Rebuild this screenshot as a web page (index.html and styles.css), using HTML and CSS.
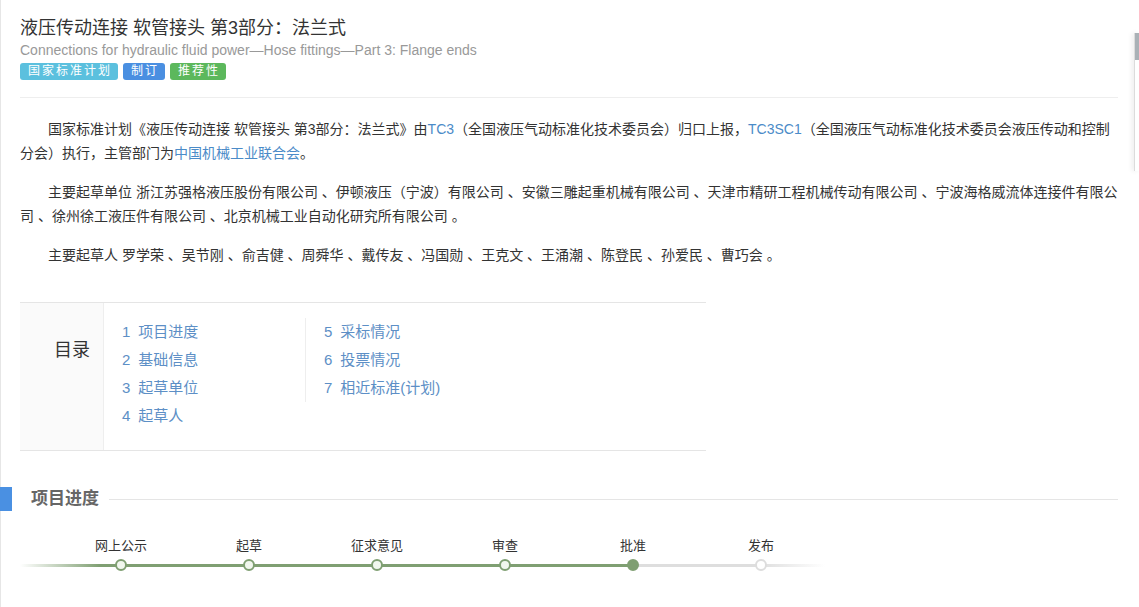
FILE: index.html
```html
<!DOCTYPE html>
<html lang="zh-CN">
<head>
<meta charset="utf-8">
<title>液压传动连接 软管接头 第3部分：法兰式</title>
<link rel="stylesheet" href="styles.css">
</head>
<body>
<div class="page">
  <header class="head">
    <h1 class="title">液压传动连接 软管接头 第3部分：法兰式</h1>
    <div class="subtitle">Connections for hydraulic fluid power—Hose fittings—Part 3: Flange ends</div>
    <div class="labels">
      <span class="label label-info">国家标准计划</span>
      <span class="label label-primary">制订</span>
      <span class="label label-success">推荐性</span>
    </div>
  </header>

  <div class="desc">
    <p>国家标准计划《液压传动连接 软管接头 第3部分：法兰式》由<a href="#">TC3</a>（全国液压气动标准化技术委员会）归口上报，<a href="#">TC3SC1</a>（全国液压气动标准化技术委员会液压传动和控制分会）执行，主管部门为<a href="#">中国机械工业联合会</a>。</p>
    <p>主要起草单位 浙江苏强格液压股份有限公司 、伊顿液压（宁波）有限公司 、安徽三雕起重机械有限公司 、天津市精研工程机械传动有限公司 、宁波海格威流体连接件有限公司 、徐州徐工液压件有限公司 、北京机械工业自动化研究所有限公司 。</p>
    <p>主要起草人 罗学荣 、吴节刚 、俞吉健 、周舜华 、戴传友 、冯国勋 、王克文 、王涌潮 、陈登民 、孙爱民 、曹巧会 。</p>
  </div>

  <div class="toc">
    <div class="toc-title">目录</div>
    <ul class="toc-col">
      <li><a href="#"><span class="num">1</span>项目进度</a></li>
      <li><a href="#"><span class="num">2</span>基础信息</a></li>
      <li><a href="#"><span class="num">3</span>起草单位</a></li>
      <li><a href="#"><span class="num">4</span>起草人</a></li>
    </ul>
    <ul class="toc-col toc-col2">
      <li><a href="#"><span class="num">5</span>采标情况</a></li>
      <li><a href="#"><span class="num">6</span>投票情况</a></li>
      <li><a href="#"><span class="num">7</span>相近标准(计划)</a></li>
    </ul>
  </div>

  <div class="section-head">
    <span class="bar"></span>
    <h2 class="section-title">项目进度</h2>
    <span class="rule"></span>
  </div>

  <div class="timeline">
    <div class="steps-labels">
      <span class="step-label">网上公示</span>
      <span class="step-label">起草</span>
      <span class="step-label">征求意见</span>
      <span class="step-label">审查</span>
      <span class="step-label">批准</span>
      <span class="step-label">发布</span>
    </div>
    <div class="track">
      <span class="node"><span class="dot done"></span></span>
      <span class="node"><span class="dot done"></span></span>
      <span class="node"><span class="dot done"></span></span>
      <span class="node"><span class="dot done"></span></span>
      <span class="node"><span class="dot current"></span></span>
      <span class="node"><span class="dot todo"></span></span>
    </div>
  </div>
</div>
<div class="side-panel"><div class="side-thumb"></div></div>
</body>
</html>
```

FILE: styles.css
```css
html {
  box-shadow: inset 1px 0 0 #e6e6e6;
  min-height: 100%;
  background: #fff;
}
body {
  margin: 0;
  font-family: "Liberation Sans", "Noto Sans CJK SC", sans-serif;
  color: #333;
  font-size: 14px;
}
.page {
  width: 1118px;
  display: flex;
  flex-direction: column;
}
a { color: #4b8bc8; text-decoration: none; }

.head {
  margin-left: 20px;
  padding-top: 17px;
  padding-bottom: 17px;
  border-bottom: 1px solid #eee;
}
.title {
  margin: 0;
  font-size: 18px;
  line-height: 22px;
  font-weight: normal;
  color: #333;
}
.subtitle {
  margin-top: 2px;
  font-size: 14px;
  line-height: 18px;
  color: #999;
}
.labels {
  margin-top: 4px;
  display: flex;
  gap: 5px;
}
.label {
  display: inline-block;
  height: 17px;
  line-height: 17px;
  padding: 0 6px 0 8px;
  font-size: 12px;
  letter-spacing: 2px;
  color: #fff;
  border-radius: 3px;
}
.label-info { background: #5bc0de; }
.label-primary { background: #4a8fe1; }
.label-success { background: #5cb85c; }

.desc {
  margin-left: 20px;
  padding-top: 19px;
}
.desc p {
  margin: 0 0 15px;
  line-height: 24px;
  text-indent: 28px;
  font-size: 14px;
}
.desc p:last-child { margin-bottom: 0; }

.toc {
  margin: 35px 0 0 20px;
  width: 686px;
  display: flex;
  border-top: 1px solid #e5e5e5;
  border-bottom: 1px solid #e5e5e5;
}
.toc-title {
  width: 84px;
  box-sizing: border-box;
  background: #fafafa;
  border-right: 1px solid #eee;
  padding: 36px 0 0 34px;
  font-size: 18px;
  line-height: 22px;
  color: #333;
  height: 147px;
}
.toc-col {
  list-style: none;
  margin: 0;
  padding: 15px 0 20px 18px;
  width: 201px;
  box-sizing: border-box;
  align-self: flex-start;
}
.toc-col2 {
  margin-top: 15px;
  padding-top: 0;
  padding-bottom: 0;
  border-left: 1px solid #eee;
}
.toc-col li {
  font-size: 15px;
  line-height: 28px;
}
.toc-col a { color: #5d8fc6; }
.num { margin-right: 8px; }

.section-head {
  margin-top: 36px;
  display: flex;
  align-items: center;
  height: 24px;
}
.bar {
  width: 12px;
  height: 24px;
  background: #4a90e2;
}
.section-title {
  margin: 0 0 0 19px;
  font-size: 17px;
  line-height: 24px;
  font-weight: bold;
  color: #666;
}
.rule {
  flex: 1;
  margin-left: 10px;
  border-top: 1px solid #e5e5e5;
}

.timeline {
  margin: 25px 0 0 20px;
  width: 805px;
}
.steps-labels {
  display: flex;
  padding-left: 37px;
}
.step-label {
  width: 128px;
  text-align: center;
  font-family: "Noto Sans CJK SC", sans-serif;
  font-size: 13px;
  line-height: 18px;
  color: #333;
}
.track {
  margin-top: 5px;
  height: 12px;
  display: flex;
  padding-left: 37px;
  background-image: linear-gradient(to right,
    rgba(127,159,114,0) 0px,
    #7f9f72 80px,
    #7f9f72 613px,
    #dedede 613px,
    #dedede 740px,
    rgba(222,222,222,0) 805px);
  background-size: 100% 3px;
  background-position: 0 50%;
  background-repeat: no-repeat;
}
.node {
  width: 128px;
  height: 12px;
  display: flex;
  justify-content: center;
}
.dot {
  display: block;
  width: 8px;
  height: 8px;
  border-radius: 50%;
  border: 2px solid #7f9f72;
  background: #f1f7ee;
}
.dot.current { background: #7f9f72; }
.dot.todo { border-color: #dddddd; background: #fff; }

.side-panel {
  position: absolute;
  top: 33px;
  right: 0;
  width: 4px;
  height: 138px;
  background: #fff;
  border-left: 1px solid #dcdcdc;
  box-shadow: -2px 0 5px rgba(0,0,0,0.08);
}
.side-thumb {
  height: 27px;
  background: #a9b1b6;
}
```
